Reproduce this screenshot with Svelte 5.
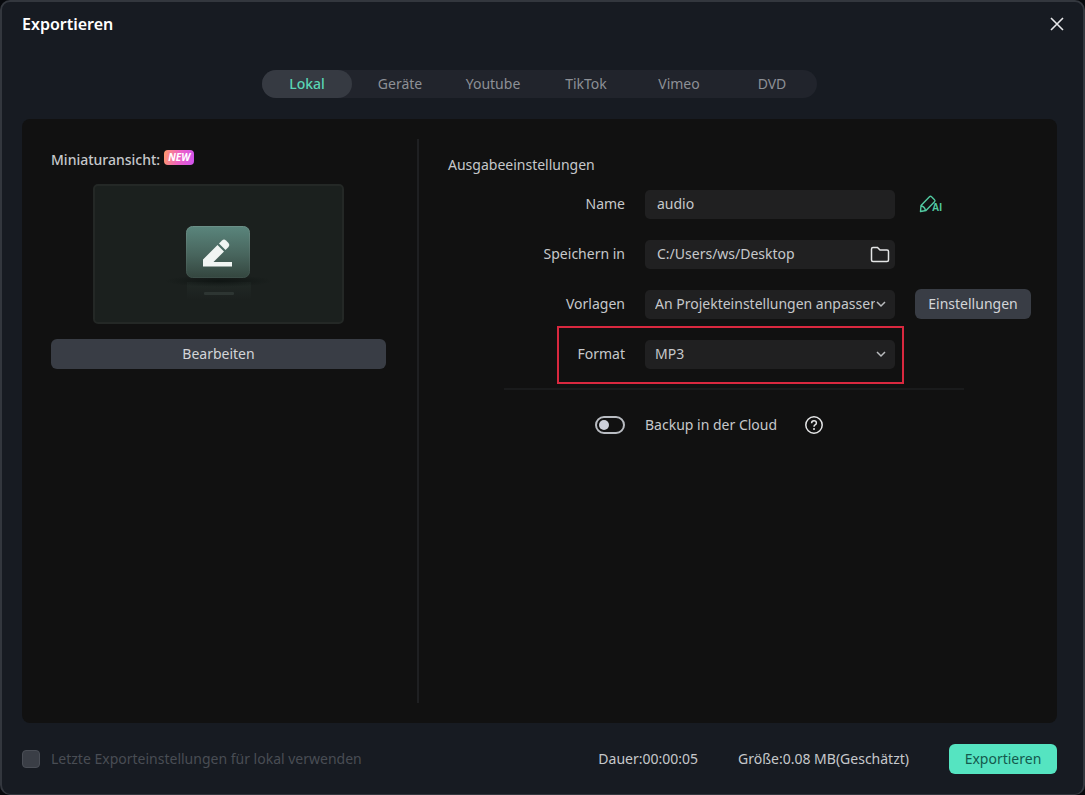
<script lang="ts">
	const tabs = ['Lokal', 'Geräte', 'Youtube', 'TikTok', 'Vimeo', 'DVD'];

	let activeTab = $state('Lokal');

	// Output settings
	let name = $state('audio');
	let folder = $state('C:/Users/ws/Desktop');
	let preset = $state('project');
	let format = $state('MP3');
	let cloudBackup = $state(false);

	let useLastSettings = $state(false);
</script>

{#snippet chevron()}
	<svg class="chevron" width="10" height="8" viewBox="0 0 10 8" fill="none" aria-hidden="true">
		<path d="M1 2l4 4 4-4" stroke="#b9bbbe" stroke-width="1.5" />
	</svg>
{/snippet}

<div class="dialog" role="dialog" aria-labelledby="dialog-title">
	<header class="dialog-header">
		<h1 id="dialog-title">Exportieren</h1>
		<button class="close-btn" aria-label="Schließen">
			<svg width="14" height="14" viewBox="0 0 14 14" fill="none">
				<path d="M1 1l12 12M13 1L1 13" stroke="#e6e7e9" stroke-width="1.6" />
			</svg>
		</button>
	</header>

	<nav class="tabs">
		{#each tabs as tab}
			<button class="tab" class:active={tab === activeTab} onclick={() => (activeTab = tab)}>
				{tab}
			</button>
		{/each}
	</nav>

	<main class="panel">
		<section class="preview">
			<h2 class="preview-title">Miniaturansicht: <span class="badge">NEW</span></h2>

			<div class="thumbnail">
				<svg width="110" height="84" viewBox="0 0 110 84" fill="none" aria-hidden="true">
					<defs>
						<linearGradient id="tile" x1="0" y1="0" x2="0" y2="1">
							<stop offset="0" stop-color="#5a857c" />
							<stop offset="0.55" stop-color="#48655d" />
							<stop offset="1" stop-color="#34463f" />
						</linearGradient>
						<linearGradient id="edge" x1="0" y1="0" x2="0" y2="1">
							<stop offset="0" stop-color="#6b8f87" />
							<stop offset="1" stop-color="#3d4f49" />
						</linearGradient>
						<radialGradient id="shadow">
							<stop offset="0" stop-color="#0f1513" />
							<stop offset="1" stop-color="#0f1513" stop-opacity="0" />
						</radialGradient>
						<linearGradient id="mirror" x1="0" y1="0" x2="0" y2="1">
							<stop offset="0" stop-color="#2b3531" stop-opacity="0.4" />
							<stop offset="1" stop-color="#2b3531" stop-opacity="0" />
						</linearGradient>
					</defs>
					<rect x="23" y="58" width="64" height="18" fill="url(#mirror)" />
					<ellipse cx="55" cy="57" rx="54" ry="6" fill="url(#shadow)" />
					<rect x="40" y="68" width="30" height="3" rx="1" fill="#2d3532" />
					<rect x="22.5" y="2.5" width="63" height="51" rx="6" fill="url(#tile)" stroke="url(#edge)" />
					<path d="M39 42.500v-7l14.500-14.500 6.500 6.500L49.500 38H68v4.500z" fill="#f1f5f3" />
					<path d="M55 19.500l3-3q2-1.800 4 0l2.500 2.500q1.800 2 0 4l-3 3z" fill="#f1f5f3" />
				</svg>
			</div>

			<button class="grey-btn edit-btn">Bearbeiten</button>
		</section>

		<section class="settings">
			<h2 class="settings-title">Ausgabeeinstellungen</h2>

			<div class="row">
				<label for="name">Name</label>
				<div class="field">
					<input id="name" type="text" bind:value={name} />
				</div>
				<button class="icon-btn" aria-label="KI-Benennung">
					<svg width="26" height="20" viewBox="0 0 26 20" fill="none">
						<path
							d="M2.500 17.500l.500-6L11.500 2.800q1-1 2 0l3 3q1 1 0 2L8 16.500zM2.500 12q4 0 5 4.500"
							stroke="#52c9a0"
							stroke-width="1.4"
							stroke-linejoin="round"
						/>
						<text x="14" y="17" class="ai-text">AI</text>
					</svg>
				</button>
			</div>

			<div class="row">
				<label for="folder">Speichern in</label>
				<div class="field">
					<input id="folder" type="text" bind:value={folder} />
					<button class="folder-btn" aria-label="Ordner wählen">
						<svg width="20" height="17" viewBox="0 0 20 17" fill="none">
							<path
								d="M1.500 14V3q0-1.500 1.500-1.500h4.500l2.500 2.500h7q1.500 0 1.500 1.500V14q0 1.500-1.500 1.500H3q-1.500 0-1.500-1.500z"
								stroke="#e4e5e6"
								stroke-width="1.5"
							/>
						</svg>
					</button>
				</div>
			</div>

			<div class="row">
				<label for="preset">Vorlagen</label>
				<div class="field">
					<select id="preset" bind:value={preset}>
						<option value="project">An Projekteinstellungen anpassen</option>
					</select>
					{@render chevron()}
				</div>
				<button class="grey-btn">Einstellungen</button>
			</div>

			<div class="row highlighted">
				<label for="format">Format</label>
				<div class="field">
					<select id="format" bind:value={format}>
						<option>MP3</option>
					</select>
					{@render chevron()}
				</div>
			</div>

			<hr />

			<div class="row cloud-row">
				<input id="cloud" class="toggle" type="checkbox" role="switch" bind:checked={cloudBackup} />
				<label for="cloud">Backup in der Cloud</label>
				<button class="icon-btn help-btn" aria-label="Hilfe">
					<svg width="20" height="20" viewBox="0 0 20 20" fill="none">
						<circle cx="10" cy="10" r="8.200" stroke="#e4e5e6" stroke-width="1.5" />
						<path
							d="M7.600 8.200q0-2.500 2.400-2.500t2.400 2.200q0 1.200-1.300 2-1.100.700-1.100 1.900"
							stroke="#e4e5e6"
							stroke-width="1.5"
						/>
						<circle cx="10" cy="13.900" r="1" fill="#e4e5e6" />
					</svg>
				</button>
			</div>
		</section>
	</main>

	<footer class="dialog-footer">
		<label class="remember">
			<input type="checkbox" bind:checked={useLastSettings} />
			Letzte Exporteinstellungen für lokal verwenden
		</label>
		<span>Dauer:00:00:05</span>
		<span>Größe:0.08 MB(Geschätzt)</span>
		<button class="export-btn">Exportieren</button>
	</footer>
</div>

<style>
	:global(body) {
		background: #07090d;
	}

	.dialog {
		box-sizing: border-box;
		min-height: 100vh;
		display: flex;
		flex-direction: column;
		padding: 0 26px 0 20px;
		border: 2px solid #33373e;
		border-bottom-width: 1px;
		border-radius: 10px;
		background: #171b22;
		color: #c6c8cb;
		font-family: 'Noto Sans', sans-serif;
		font-size: 14px;
		line-height: 20px;
	}

	h1,
	h2 {
		margin: 0;
		font-size: 14px;
		font-weight: 400;
	}

	button,
	input,
	select {
		margin: 0;
		padding: 0;
		border: none;
		background: none;
		color: inherit;
		font: inherit;
	}

	button {
		cursor: pointer;
	}

	svg {
		display: block;
	}

	.dialog-header {
		display: flex;
		justify-content: space-between;
		align-items: center;
		height: 44px;
	}

	.dialog-header h1 {
		color: #fff;
		font-size: 16px;
		font-weight: 600;
	}

	.close-btn {
		margin-right: -7px;
	}

	.tabs {
		display: grid;
		grid-template-columns: repeat(6, 90px);
		column-gap: 3px;
		align-self: center;
		height: 28px;
		margin: 24px 0 21px;
		border-radius: 14px;
		background: #21242c;
	}

	.tab {
		border-radius: 14px;
		color: #8d9096;
	}

	.tab.active {
		background: #363a42;
		color: #5ad6b5;
		font-weight: 500;
	}

	.panel {
		flex: 1;
		display: flex;
		padding: 20px 26px 20px 29px;
		border-radius: 8px;
		background: #111;
	}

	.preview {
		display: flex;
		flex-direction: column;
		width: 335px;
		padding-right: 31px;
		border-right: 2px solid #1f2022;
	}

	.preview-title {
		display: flex;
		gap: 4px;
		margin: 11px 0 14px;
		font-weight: 500;
	}

	.badge {
		align-self: flex-start;
		padding: 0 4px;
		border-radius: 4px;
		background: linear-gradient(100deg, #ff9a6a, #ee62c4 50%, #d052f0);
		color: #fff;
		font-size: 10px;
		font-style: italic;
		font-weight: 700;
		line-height: 15px;
	}

	.thumbnail {
		box-sizing: border-box;
		display: flex;
		align-items: flex-end;
		justify-content: center;
		align-self: center;
		width: 251px;
		height: 140px;
		padding-bottom: 14px;
		border: 2px solid #242826;
		border-radius: 5px;
		background: #1b201e;
	}

	.grey-btn {
		height: 30px;
		border-radius: 6px;
		background: #393d45;
		color: #d3d5d8;
	}

	.edit-btn {
		margin-top: 15px;
	}

	.settings {
		flex: 1;
		padding: 16px 0 0 29px;
	}

	.row {
		display: grid;
		grid-template-columns: 177px 250px 116px;
		column-gap: 20px;
		align-items: center;
		height: 50px;
	}

	.settings-title {
		margin-bottom: 4px;
	}

	.row label {
		text-align: right;
	}

	.field {
		position: relative;
		display: flex;
		align-items: center;
		height: 29px;
		border-radius: 5px;
		background: #202021;
	}

	.field input {
		flex: 1;
		min-width: 0;
		padding-left: 12px;
	}

	.field select {
		appearance: none;
		width: 100%;
		height: 100%;
		padding: 0 20px 0 10px;
		text-overflow: clip;
	}

	.chevron {
		position: absolute;
		right: 9px;
		pointer-events: none;
	}

	.folder-btn {
		padding-right: 5px;
	}

	.icon-btn {
		justify-self: start;
		padding-left: 3px;
	}

	.help-btn {
		padding-left: 7px;
	}

	.ai-text {
		fill: #52c9a0;
		font-family: 'Liberation Sans', sans-serif;
		font-size: 10px;
		font-weight: 700;
	}

	.highlighted {
		position: relative;
	}

	/* frame drawn around the row without taking part in the layout */
	.highlighted::after {
		content: '';
		position: absolute;
		box-sizing: border-box;
		top: -3px;
		left: 109px;
		width: 347px;
		height: 58px;
		border: 2px solid #d9283f;
		pointer-events: none;
	}

	hr {
		width: 460px;
		height: 2px;
		margin: 9px 0 10px 56px;
		border: none;
		background: #1a1b1c;
	}

	.cloud-row {
		grid-template-columns: 177px auto auto;
		justify-content: start;
	}

	.toggle {
		appearance: none;
		box-sizing: border-box;
		justify-self: end;
		width: 30px;
		height: 18px;
		padding: 2px;
		border: 2px solid #b9bcc2;
		border-radius: 9px;
	}

	.toggle::before {
		content: '';
		display: block;
		width: 10px;
		height: 10px;
		border-radius: 50%;
		background: #cdd0da;
	}

	.toggle:checked::before {
		margin-left: auto;
	}

	.dialog-footer {
		display: flex;
		align-items: center;
		gap: 40px;
		height: 71px;
	}

	.remember {
		display: flex;
		align-items: center;
		gap: 11px;
		margin-right: auto;
		color: #494d54;
	}

	.remember input {
		appearance: none;
		box-sizing: border-box;
		width: 18px;
		height: 18px;
		border: 1px solid #4a4e56;
		border-radius: 4px;
		background: #3a3e46;
	}

	.remember input:checked {
		background: #55e4c1;
	}

	.export-btn {
		width: 108px;
		height: 30px;
		border-radius: 6px;
		background: #55e4c1;
		color: #14594d;
	}
</style>
